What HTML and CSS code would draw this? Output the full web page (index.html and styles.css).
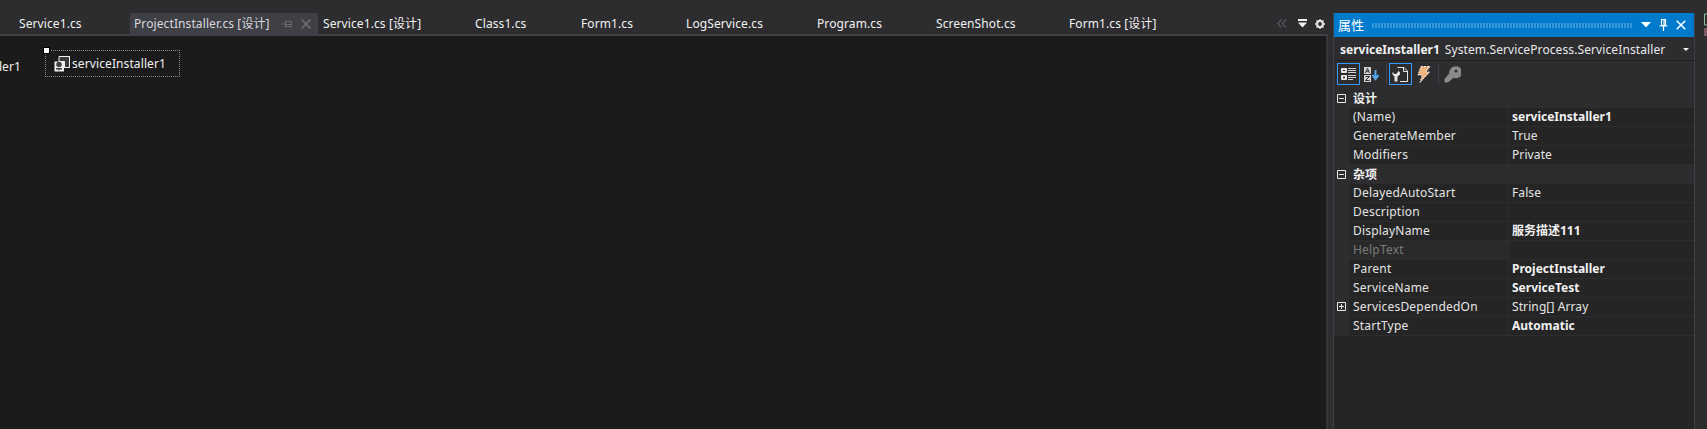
FILE: index.html
```html
<!DOCTYPE html>
<html lang="zh-CN">
<head>
<meta charset="utf-8">
<title>ProjectInstaller.cs [设计]</title>
<link rel="stylesheet" href="styles.css">
</head>
<body>
<div class="app">
  <main class="doc">
    <div class="tabstrip">
      <div class="tab tab-first">Service1.cs</div>
      <div class="tab tab-active">
        <span>ProjectInstaller.cs [设计]</span>
        <svg class="tab-pin" width="10" height="8" viewBox="0 0 10 8"><path d="M0 4H3.500M3.500 .5V7.500M3.500 1.500H9.500V6.500H3.500M3.500 4.500H9.500" fill="none" stroke="#6a6a6f"/></svg>
        <svg class="tab-close" width="10" height="10" viewBox="0 0 10 10"><path d="M.7 .7L9.300 9.300M9.300 .7L.7 9.300" fill="none" stroke="#6a6a6f" stroke-width="1.700"/></svg>
      </div>
      <div class="tab">Service1.cs [设计]</div>
      <div class="tab">Class1.cs</div>
      <div class="tab">Form1.cs</div>
      <div class="tab">LogService.cs</div>
      <div class="tab">Program.cs</div>
      <div class="tab">ScreenShot.cs</div>
      <div class="tab">Form1.cs [设计]</div>
      <div class="tab-tools">
        <svg width="10" height="9" viewBox="0 0 10 9"><path d="M4.500 .5L.8 4.500L4.500 8.500M9 .5L5.300 4.500L9 8.500" fill="none" stroke="#55555a" stroke-width="1.300"/></svg>
        <svg class="tool-drop" width="9" height="9" viewBox="0 0 9 9"><path d="M0 0H9V2H0ZM0 3.500H9L4.500 8.500Z" fill="#f1f1f1"/></svg>
        <svg class="tool-gear" width="10" height="10" viewBox="0 0 10 10"><circle cx="5" cy="5" r="2.900" fill="none" stroke="#e6e6e6" stroke-width="2"/><path d="M5 0V2M5 8V10M0 5H2M8 5H10M1.500 1.500L2.800 2.800M7.200 7.200L8.500 8.500M8.500 1.500L7.200 2.800M1.500 8.500L2.800 7.200" stroke="#e6e6e6" stroke-width="1.500"/></svg>
      </div>
    </div>
    <div class="canvas">
      <span class="clipped-label">ler1</span>
      <div class="component">
        <span class="grab"></span>
        <svg width="16" height="16" viewBox="0 0 16 16">
          <path d="M5 .5H15.500V11.500H10.500V5.500H5Z" fill="#3a3a3a" stroke="#f1f1f1"/>
          <path d="M5.500 .5H15.500V11.500H10" fill="none" stroke="#f1f1f1" stroke-width="1"/>
          <rect x=".5" y="5.500" width="9.500" height="10" fill="#f1f1f1"/>
          <circle cx="5" cy="8.500" r="2.800" fill="#444"/>
          <path d="M2 12H8V13.500H6L5 14.800L4 13.500H2Z" fill="#444"/>
        </svg>
        <span>serviceInstaller1</span>
      </div>
    </div>
  </main>

  <aside class="panel">
    <header class="panel-title">
      <span>属性</span>
      <div class="grip"></div>
      <svg width="10" height="6" viewBox="0 0 10 6"><path d="M0 0H10L5 5.500Z" fill="#fff"/></svg>
      <svg width="9" height="12" viewBox="0 0 9 12"><path d="M2.500 .5H6.500V6.500H2.500ZM5 .5V6.500M.5 7H8.500M4.500 7V12" fill="none" stroke="#fff" stroke-width="1.200"/></svg>
      <svg width="10" height="10" viewBox="0 0 10 10"><path d="M.7 .7L9.300 9.300M9.300 .7L.7 9.300" fill="none" stroke="#fff" stroke-width="1.500"/></svg>
    </header>
    <div class="selector">
      <strong>serviceInstaller1</strong>
      <span>System.ServiceProcess.ServiceInstaller</span>
      <svg class="selector-arrow" width="6" height="3" viewBox="0 0 6 3"><path d="M0 0H6L3 3Z" fill="#f1f1f1"/></svg>
    </div>
    <div class="toolbar">
      <div class="tool tool-on">
        <svg width="16" height="14" viewBox="0 0 16 14"><path d="M.5 1.500H5.500V5.500H.5ZM.5 8.500H5.500V12.500H.5Z" fill="#e6e6e6" stroke="#e6e6e6"/><path d="M2 3.500H4M2 10.500H4M3 9.500V11.500" stroke="#2d2d30"/><path d="M7 1.500H15M7 3.500H15M7 5.500H15M7 8.500H15M7 10.500H15M7 12.500H12" stroke="#d0d0d0"/></svg>
      </div>
      <div class="tool">
        <svg width="16" height="15" viewBox="0 0 16 15"><rect x="0" y="0" width="7" height="7" fill="#d0d0d0"/><rect x="0" y="8" width="7" height="7" fill="#d0d0d0"/><path d="M1.500 6L3.500 1.500L5.500 6M2.500 4.300H4.500M1.500 9.500H5.500L1.500 13.500H5.500" fill="none" stroke="#2d2d30"/><path d="M11.500 3V11M8.500 8L11.500 12L14.500 8" fill="none" stroke="#55aaee" stroke-width="2"/></svg>
      </div>
      <i class="tool-sep"></i>
      <div class="tool tool-on">
        <svg width="17" height="17" viewBox="0 0 17 17"><path d="M5.500 1.500H12L15.500 5V15.500H8" fill="none" stroke="#e6e6e6"/><path d="M11.500 1.500V5.500H15.500" fill="none" stroke="#e6e6e6"/><path d="M.5 6L2.500 8H4L6 6V4.500L8 6.500V8.500L5.500 10.500V15.500H2.500V10.500L.5 8.500Z" fill="#e6e6e6"/></svg>
      </div>
      <div class="tool">
        <svg width="15" height="17" viewBox="0 0 15 17"><path d="M5 .5H14L10 6H13.500L4 16.500L6.500 9H2Z" fill="#f2b37a" stroke="#f1f1f1" stroke-dasharray="2 1"/></svg>
      </div>
      <i class="tool-sep"></i>
      <div class="tool">
        <svg width="17" height="17" viewBox="0 0 17 17"><path d="M10.500 .5A6 6 0 1 1 9.500 11.700L4 16.500H.5V13L5.300 7.500A6 6 0 0 1 10.500 .5Z" fill="#8a8a8a"/><circle cx="12" cy="5" r="1.500" fill="#2d2d30"/></svg>
      </div>
    </div>
    <div class="grid">
      <div class="cat"><svg class="exp" width="9" height="9" viewBox="0 0 9 9"><path d="M.5 .5H8.500V8.500H.5ZM2 4.500H7" fill="none" stroke="#e6e6e6"/></svg><b>设计</b></div>
      <div class="row"><div class="name">(Name)</div><div class="val bold">serviceInstaller1</div></div>
      <div class="row"><div class="name">GenerateMember</div><div class="val">True</div></div>
      <div class="row"><div class="name">Modifiers</div><div class="val">Private</div></div>
      <div class="cat"><svg class="exp" width="9" height="9" viewBox="0 0 9 9"><path d="M.5 .5H8.500V8.500H.5ZM2 4.500H7" fill="none" stroke="#e6e6e6"/></svg><b>杂项</b></div>
      <div class="row"><div class="name">DelayedAutoStart</div><div class="val">False</div></div>
      <div class="row"><div class="name">Description</div><div class="val"></div></div>
      <div class="row"><div class="name">DisplayName</div><div class="val bold">服务描述111</div></div>
      <div class="row"><div class="name dim">HelpText</div><div class="val"></div></div>
      <div class="row"><div class="name">Parent</div><div class="val bold">ProjectInstaller</div></div>
      <div class="row"><div class="name">ServiceName</div><div class="val bold">ServiceTest</div></div>
      <div class="row"><svg class="exp exp-row" width="9" height="9" viewBox="0 0 9 9"><path d="M.5 .5H8.500V8.500H.5ZM2 4.500H7M4.500 2V7" fill="none" stroke="#e6e6e6"/></svg><div class="name">ServicesDependedOn</div><div class="val">String[] Array</div></div>
      <div class="row"><div class="name">StartType</div><div class="val bold">Automatic</div></div>
    </div>
  </aside>
  <svg class="edge-icon" width="6" height="24" viewBox="0 0 6 24"><path d="M.5 1H6M.5 1V12H6" fill="none" stroke="#8fbf9a"/><rect x="0" y="15" width="6" height="8" fill="#7a5a66"/></svg>
</div>
</body>
</html>
```

FILE: styles.css
```css
* { box-sizing: border-box; }
html, body { margin: 0; height: 100%; overflow: hidden; }
body {
  background: #2d2d30;
  color: #f1f1f1;
  font-family: "Noto Sans", "Noto Sans CJK SC", sans-serif;
  font-size: 12px;
  line-height: 16px;
  letter-spacing: 0.1px;
}
.app { display: flex; height: 429px; }

.doc { width: 1328px; display: flex; flex-direction: column; flex: none; }
.tabstrip {
  height: 36px;
  padding-top: 13px;
  display: grid;
  grid-template-columns: 130px 188px 152px 106px 105px 131px 119px 133px 164px 1fr;
  border-bottom: 2px solid #3f3f46;
  flex: none;
}
.tab {
  display: flex;
  align-items: center;
  height: 21px;
  padding-top: 1px;
  padding-left: 5px;
  white-space: nowrap;
  color: #f1f1f1;
}
.tab-first { padding-left: 19px; }
.tab-active { background: #3f3f46; padding-left: 4px; color: #d8d8dc; }
.tab-pin { margin-left: 12px; }
.tab-close { margin-left: 9px; }
.tab-tools { display: flex; align-items: center; justify-content: flex-end; height: 21px; padding-right: 3px; }
.tool-drop { margin-left: 11px; }
.tool-gear { margin-left: 8px; }
.canvas {
  flex: 1;
  background: #1b1b1b;
  border-right: 2px solid #36363a;
  display: flex;
  align-items: flex-start;
  overflow: hidden;
  padding-top: 14px;
}
.clipped-label { width: 45px; padding-top: 9px; padding-right: 24px; flex: none; white-space: nowrap; direction: rtl; }
.component {
  position: relative;
  width: 135px;
  height: 27px;
  border: 1px dotted #8a8a8a;
  display: flex;
  align-items: center;
  gap: 2px;
  padding-left: 8px;
}
.grab {
  position: absolute;
  left: -2px;
  top: -3px;
  width: 5px;
  height: 5px;
  background: #fff;
  box-shadow: 0 0 0 1px #000;
}

.panel {
  margin: 13px 0 0 5px;
  width: 362px;
  border-left: 1px solid #3f3f46;
  border-right: 1px solid #3f3f46;
  display: flex;
  flex-direction: column;
  flex: none;
  height: 416px;
}
.panel-title {
  height: 24px;
  background: #007acc;
  color: #fff;
  display: flex;
  align-items: center;
  padding: 0 8px 0 4px;
  gap: 8px;
  font-size: 13px;
  flex: none;
}
.grip {
  flex: 1;
  height: 5px;
  background-image: radial-gradient(circle at 1px 1px, #3d9bdb 0.7px, transparent 0.8px);
  background-size: 3px 2px;
}
.selector {
  height: 24px;
  display: flex;
  align-items: center;
  gap: 5px;
  padding: 2px 0 0 6px;
  border-bottom: 1px solid #1f1f1f;
  flex: none;
}
.selector strong { font-weight: 700; letter-spacing: 0; }
.selector span { color: #e8e8e8; }
.selector-arrow { margin-left: auto; margin-right: 5px; }
.toolbar {
  height: 28px;
  display: flex;
  align-items: flex-start;
  padding: 2px 0 0 3px;
  flex: none;
}
.tool {
  width: 23px;
  height: 22px;
  display: flex;
  align-items: center;
  justify-content: center;
  border: 1px solid transparent;
}
.tool-on { border-color: #3399ff; }
.tool-sep { width: 1px; height: 20px; background: #3f3f46; margin: 1px 2px 0 3px; }

.grid { flex: 1; background: #252526; }
.cat {
  height: 19px;
  background: #2d2d30;
  display: flex;
  align-items: center;
  padding-left: 3px;
}
.cat b { margin-left: 7px; font-weight: 700; }
.exp { flex: none; display: block; }
.row {
  height: 19px;
  display: flex;
  position: relative;
  padding-left: 15px;
  padding-bottom: 1px;
  background: #2d2d30;
}
.exp-row { position: absolute; left: 3px; top: 4px; }
.name, .val { background: #252526; height: 18px; display: flex; align-items: center; white-space: nowrap; }
.name { width: 159px; padding-left: 4px; color: #e4e4e4; margin-right: 1px; letter-spacing: 0.2px; }
.val { flex: 1; padding-left: 3px; color: #e4e4e4; }
.bold { font-weight: 700; color: #f1f1f1; letter-spacing: 0; }
.dim { color: #7a7a7a; background: #2a2a2b; }

.edge-icon { margin: 13px 0 0 9px; flex: none; }
```
